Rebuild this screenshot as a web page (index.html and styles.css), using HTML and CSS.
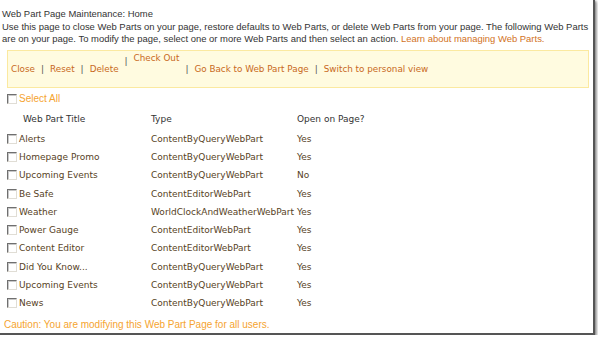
FILE: index.html
```html
<!DOCTYPE html>
<html lang="en">
<head>
    <meta charset="UTF-8">
    <meta name="viewport" content="width=device-width, initial-scale=1.0">
    <title>Web Part Page Maintenance: Home</title>
    <link rel="stylesheet" href="styles.css">
</head>
<body>
    <div class="frame">
        <div class="intro">
            <div class="intro-line">Web Part Page Maintenance: Home</div>
            <div class="intro-line">Use this page to close Web Parts on your page, restore defaults to Web Parts, or delete Web Parts from your page. The following Web Parts</div>
            <div class="intro-line">are on your page. To modify the page, select one or more Web Parts and then select an action. <a href="#" class="learn-link">Learn about managing Web Parts.</a></div>
        </div>

        <div class="toolbar">
            <a href="#" class="tool-link">Close</a>
            <span class="sep">|</span>
            <a href="#" class="tool-link">Reset</a>
            <span class="sep">|</span>
            <a href="#" class="tool-link">Delete</a>
            <span class="sep sep-high">|</span>
            <a href="#" class="tool-link tool-high">Check Out</a>
            <span class="sep">|</span>
            <a href="#" class="tool-link">Go Back to Web Part Page</a>
            <span class="sep">|</span>
            <a href="#" class="tool-link">Switch to personal view</a>
        </div>

        <div class="select-all">
            <input type="checkbox" class="check">
            <span class="select-all-label">Select All</span>
        </div>

        <div class="parts">
            <div class="head"></div>
            <div class="head head-title">Web Part Title</div>
            <div class="head">Type</div>
            <div class="head">Open on Page?</div>

            <div class="cell"><input type="checkbox" class="check"></div>
            <div class="cell">Alerts</div>
            <div class="cell">ContentByQueryWebPart</div>
            <div class="cell">Yes</div>

            <div class="cell"><input type="checkbox" class="check"></div>
            <div class="cell">Homepage Promo</div>
            <div class="cell">ContentByQueryWebPart</div>
            <div class="cell">Yes</div>

            <div class="cell"><input type="checkbox" class="check"></div>
            <div class="cell">Upcoming Events</div>
            <div class="cell">ContentByQueryWebPart</div>
            <div class="cell">No</div>

            <div class="cell"><input type="checkbox" class="check"></div>
            <div class="cell">Be Safe</div>
            <div class="cell">ContentEditorWebPart</div>
            <div class="cell">Yes</div>

            <div class="cell"><input type="checkbox" class="check"></div>
            <div class="cell">Weather</div>
            <div class="cell">WorldClockAndWeatherWebPart</div>
            <div class="cell">Yes</div>

            <div class="cell"><input type="checkbox" class="check"></div>
            <div class="cell">Power Gauge</div>
            <div class="cell">ContentEditorWebPart</div>
            <div class="cell">Yes</div>

            <div class="cell"><input type="checkbox" class="check"></div>
            <div class="cell">Content Editor</div>
            <div class="cell">ContentEditorWebPart</div>
            <div class="cell">Yes</div>

            <div class="cell"><input type="checkbox" class="check"></div>
            <div class="cell">Did You Know...</div>
            <div class="cell">ContentByQueryWebPart</div>
            <div class="cell">Yes</div>

            <div class="cell"><input type="checkbox" class="check"></div>
            <div class="cell">Upcoming Events</div>
            <div class="cell">ContentByQueryWebPart</div>
            <div class="cell">Yes</div>

            <div class="cell"><input type="checkbox" class="check"></div>
            <div class="cell">News</div>
            <div class="cell">ContentByQueryWebPart</div>
            <div class="cell">Yes</div>
        </div>

        <div class="caution">Caution: You are modifying this Web Part Page for all users.</div>
    </div>
</body>
</html>
```

FILE: styles.css
```css
body {
    margin: 0;
    padding: 0;
    background-color: #fff;
}

.frame {
    box-sizing: border-box;
    width: 595px;
    height: 335px;
    background-color: #fff;
    border-right: 2px solid #555;
    border-bottom: 2px solid #555;
    box-shadow: 1px 1px 2px #888, 2px 2px 3px #bbb;
    font-family: "DejaVu Sans", Verdana, sans-serif;
    font-size: 9px;
    overflow: hidden;
}

.intro {
    padding: 8px 0 0 2px;
    font-family: "Liberation Sans", Arial, sans-serif;
    font-size: 9.45px;
    color: #333;
}

.intro-line {
    height: 12.5px;
    line-height: 12.5px;
    white-space: nowrap;
}

.learn-link {
    color: #d2721e;
    text-decoration: none;
}

.toolbar {
    box-sizing: border-box;
    display: flex;
    align-items: flex-end;
    margin: 4px 0 0 7px;
    width: 582px;
    height: 38px;
    padding: 0 0 12px 3px;
    background-color: #fffbe0;
    border: 1px solid #fbe9a0;
}

.tool-link {
    color: #c8691c;
    text-decoration: none;
    font-size: 8.8px;
    line-height: 11px;
}

.tool-high {
    align-self: flex-start;
    margin-top: 2px;
}

.sep {
    color: #555;
    line-height: 11px;
    margin: 0 6px;
}

.sep-high {
    margin-bottom: 8px;
}

.select-all {
    display: flex;
    align-items: center;
    margin: 6px 0 0 7px;
    height: 10px;
}

.select-all-label {
    margin-left: 2px;
    color: #f5a430;
    font-family: "Liberation Sans", Arial, sans-serif;
    font-size: 10px;
}

.check {
    appearance: none;
    box-sizing: border-box;
    width: 10px;
    height: 10px;
    margin: 0;
    background-color: #fff;
    border-top: 1px solid #6f6f6f;
    border-left: 1px solid #6f6f6f;
    border-right: 1px solid #e0ddd5;
    border-bottom: 1px solid #e0ddd5;
    box-shadow: inset 1px 1px 0 #c8c8c8;
}

.parts {
    display: grid;
    grid-template-columns: 12px 132px 146px auto;
    grid-template-rows: 22px;
    grid-auto-rows: 18.3px;
    margin: 4px 0 0 7px;
    color: #57421e;
}

.parts .cell,
.parts .head {
    display: flex;
    align-items: center;
    white-space: nowrap;
}

.parts .head {
    color: #333;
}

.head-title {
    padding-left: 4px;
}

.caution {
    margin: 7px 0 0 4px;
    color: #f5a430;
    font-family: "Liberation Sans", Arial, sans-serif;
    font-size: 10px;
}
```
